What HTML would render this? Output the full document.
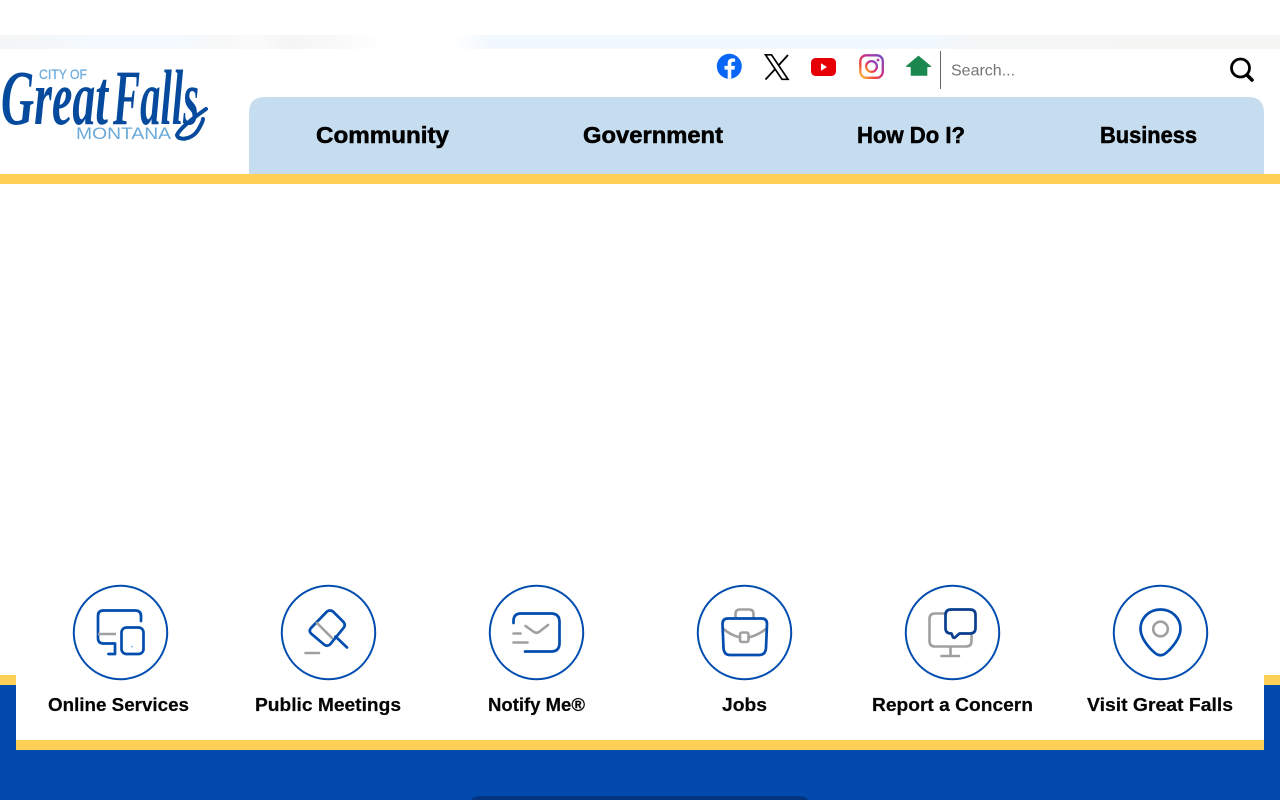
<!DOCTYPE html>
<html lang="en">
<head>
<meta charset="utf-8">
<title>City of Great Falls, Montana</title>
<style>
html,body{margin:0;padding:0;width:1280px;height:800px;overflow:hidden;background:#fff}
svg{display:block;position:absolute;left:0;top:0}
text{font-family:"Liberation Sans",sans-serif}
.nav{font-size:23px;font-weight:700;fill:#000;stroke:#000;stroke-width:.55px}
.lab{font-size:18px;font-weight:700;fill:#050505;stroke:#050505;stroke-width:.2px}
.c{fill:#fff;stroke:#024dae;stroke-width:2}
.b{fill:none;stroke:#024dae;stroke-width:2.7;stroke-linecap:round;stroke-linejoin:round}
.g{fill:none;stroke:#a0a0a0;stroke-width:2.6;stroke-linecap:round;stroke-linejoin:round}
.logo{font-family:"Liberation Serif",serif;font-size:78px;font-weight:700;font-style:italic;fill:#064a9e}
</style>
</head>
<body>
<svg width="1280" height="800" viewBox="0 0 1280 800" xmlns="http://www.w3.org/2000/svg">
<defs>
<linearGradient id="strip" x1="0" x2="1" y1="0" y2="0">
<stop offset="0" stop-color="#f3f5f6"/>
<stop offset="0.05" stop-color="#f5f8fa"/>
<stop offset="0.07" stop-color="#f4faff"/>
<stop offset="0.14" stop-color="#f4faff"/>
<stop offset="0.17" stop-color="#f6f7f7"/>
<stop offset="0.2" stop-color="#fbfbfb"/>
<stop offset="0.225" stop-color="#f5f5f5"/>
<stop offset="0.27" stop-color="#fafafa"/>
<stop offset="0.3" stop-color="#ffffff"/>
<stop offset="0.352" stop-color="#ffffff"/>
<stop offset="0.385" stop-color="#f1f8fe"/>
<stop offset="0.73" stop-color="#f1f8fe"/>
<stop offset="0.765" stop-color="#f5f6f6"/>
<stop offset="1" stop-color="#f5f5f3"/>
</linearGradient>
<linearGradient id="ig" x1="0" y1="1" x2="1" y2="0">
<stop offset="0" stop-color="#fdc83f"/>
<stop offset="0.3" stop-color="#f0463c"/>
<stop offset="0.6" stop-color="#c7318f"/>
<stop offset="1" stop-color="#6a4cc9"/>
</linearGradient>
</defs>

<!-- header strip -->
<rect x="0" y="35" width="1280" height="14" fill="url(#strip)"/>

<!-- logo -->
<text x="39" y="79" font-size="13.5" fill="#6fadde" stroke="#6fadde" stroke-width=".3" textLength="48" lengthAdjust="spacingAndGlyphs">CITY OF</text>
<text class="logo" x="1" y="124" textLength="107" lengthAdjust="spacingAndGlyphs">Great</text>
<text class="logo" x="113" y="124" textLength="86" lengthAdjust="spacingAndGlyphs">Falls</text>
<path d="M206 109 C196 116 180 128 177 135 C178 141 192 140 198 130 C201 125 203 121 203 119" fill="none" stroke="#064a9e" stroke-width="4" stroke-linecap="round"/>
<text x="76" y="139" font-size="17" fill="#6aa9d8" textLength="95" lengthAdjust="spacingAndGlyphs">MONTANA</text>

<!-- social icons -->
<circle cx="729.300" cy="66.300" r="12.500" fill="#0a66f7"/>
<path d="M731.300 78.800v-9.200h3.100l.6-3.700h-3.700v-2.200c0-1.100.5-1.900 2-1.900h1.800v-3.200c-.9-.1-1.800-.2-2.700-.2-2.900 0-4.700 1.700-4.700 4.800v2.700h-3.200v3.700h3.200v9.200z" fill="#fff"/>

<path d="M765.500 79.500 L775.500 68.700 M788 55 L778 66" fill="none" stroke="#000" stroke-width="1.800"/>
<path d="M765.500 54.800 H771.500 L788 79.300 H782 Z" fill="#fff" stroke="#000" stroke-width="1.700"/>

<rect x="811" y="58" width="25" height="18" rx="4.500" fill="#e60005"/>
<path d="M821 63.300 L827 67 L821 70.700 Z" fill="#fff"/>

<rect x="860.300" y="55.300" width="22.500" height="22.500" rx="6" fill="none" stroke="url(#ig)" stroke-width="2.300"/>
<circle cx="871.500" cy="66.500" r="5.400" fill="none" stroke="url(#ig)" stroke-width="2.200"/>
<circle cx="878" cy="60" r="1.400" fill="#a83cae"/>

<path d="M906 66.500 L918.500 56 L931 66.500 L927 67 V75.500 H911 V67 Z" fill="#1b8850" stroke="#1b8850" stroke-width=".6" stroke-linejoin="round"/>

<rect x="940" y="51" width="1" height="38" fill="#666"/>
<text x="951" y="75.500" font-size="16" fill="#757575">Search...</text>
<circle cx="1240.500" cy="68" r="9" fill="none" stroke="#000" stroke-width="2.800"/>
<path d="M1247 75 L1252 80" stroke="#000" stroke-width="3.600" stroke-linecap="round"/>

<!-- nav -->
<path d="M249 174 V113 Q249 97 265 97 H1248 Q1264 97 1264 113 V174 Z" fill="#c6ddf0"/>
<text class="nav" x="316" y="143" textLength="133" lengthAdjust="spacingAndGlyphs">Community</text>
<text class="nav" x="583" y="143" textLength="140" lengthAdjust="spacingAndGlyphs">Government</text>
<text class="nav" x="857" y="143" textLength="108" lengthAdjust="spacingAndGlyphs">How Do I?</text>
<text class="nav" x="1100" y="143" textLength="97" lengthAdjust="spacingAndGlyphs">Business</text>
<rect x="0" y="174" width="1280" height="10" fill="#ffd055"/>

<!-- footer bands -->
<rect x="0" y="675" width="1280" height="10" fill="#ffd055"/>
<rect x="0" y="685" width="1280" height="115" fill="#024aab"/>
<rect x="16" y="675" width="1248" height="65" fill="#fff"/>
<rect x="16" y="740" width="1248" height="10" fill="#ffd055"/>
<path d="M471 800 Q473 796 481 796 H798 Q806 796 808 800 Z" fill="#03347f"/>

<!-- circles -->
<circle class="c" cx="120.500" cy="632.500" r="46.700"/>
<circle class="c" cx="328.500" cy="632.500" r="46.700"/>
<circle class="c" cx="536.500" cy="632.500" r="46.700"/>
<circle class="c" cx="744.500" cy="632.500" r="46.700"/>
<circle class="c" cx="952.500" cy="632.500" r="46.700"/>
<circle class="c" cx="1160.500" cy="632.500" r="46.700"/>

<!-- icon 1 online services -->
<path class="b" d="M141 621 V616 Q141 610.500 135 610.500 H103.500 Q98 610.500 98 616 V638 Q98 643.500 103.500 643.500 H115 V654 H108.500"/>
<rect class="b" x="121.500" y="627.500" width="22" height="26.500" rx="5"/>
<path class="g" d="M98 634 H116" style="stroke-linecap:butt"/>
<circle cx="132" cy="646.700" r=".8" fill="#6f9fd8"/>

<!-- icon 2 public meetings -->
<path class="b" d="M327 611.500 Q330 609.500 333 611.500 L343.500 622 Q346 625 343.500 628 L330 644.500 Q327 647 324 644.500 L311 633.500 Q308.500 631 311 628 Z"/>
<path class="b" d="M335.500 636.500 L347 647.500"/>
<path class="g" d="M317 623 L332 638"/>
<path class="g" d="M305.500 653 H319"/>

<!-- icon 3 notify me -->
<path class="b" d="M513.500 623 V621 Q513.500 613.500 521 613.500 H551 Q559.500 613.500 559.500 622 V643 Q559.500 651.500 551 651.500 H525"/>
<path class="g" d="M525.500 626 L534 632 Q536.500 633.500 539 632 L548 625"/>
<path class="g" d="M513.500 633.500 H520.500"/>
<path class="g" d="M513.500 642.500 H527.500"/>

<!-- icon 4 jobs -->
<path class="g" d="M735.500 618 V614 Q735.500 609.500 740 609.500 H749 Q753.500 609.500 753.500 614 V618"/>
<path class="g" d="M722.500 628 Q730 635 740 637.500 M748.500 637.500 Q759 635 767 628"/>
<rect class="g" x="740" y="632.500" width="8.500" height="9.500" rx="2"/>
<path class="b" d="M728 618.500 H761.500 Q767 618.500 767 624 L766 648 Q765.500 655 759 655 H730 Q724 655 723.500 648 L722.500 624 Q722.500 618.500 728 618.500 Z"/>

<!-- icon 5 report a concern -->
<path class="g" d="M945 613.500 H935 Q929.500 613.500 929.500 619 V641 Q929.500 646.500 935 646.500 H966 Q971.500 646.500 971.500 641 V634.500"/>
<path class="g" d="M950.500 647 V656 M941.500 656 H959"/>
<path d="M951 609.500 H970 Q975.500 609.500 975.500 615 V628 Q975.500 633.500 970 633.500 H959.500 L955 637.500 Q953 638.500 952.500 636 L951.500 633.500 H951 Q945.500 633.500 945.500 628 V615 Q945.500 609.500 951 609.500 Z" fill="none" stroke="#0a3f8f" stroke-width="2.700" stroke-linejoin="round"/>

<!-- icon 6 visit great falls -->
<path class="b" d="M1160.500 609.500 C1149 609.500 1140.500 618 1140.500 629 C1140.500 638 1149 648 1155 653 Q1160.500 657.500 1166 653 C1172 648 1180.500 638 1180.500 629 C1180.500 618 1172 609.500 1160.500 609.500 Z"/>
<circle class="g" cx="1160.500" cy="629" r="7.300"/>

<!-- labels -->
<text class="lab" x="48" y="711" textLength="141" lengthAdjust="spacingAndGlyphs">Online Services</text>
<text class="lab" x="255" y="711" textLength="146" lengthAdjust="spacingAndGlyphs">Public Meetings</text>
<text class="lab" x="488" y="711" textLength="97" lengthAdjust="spacingAndGlyphs">Notify Me®</text>
<text class="lab" x="722" y="711" textLength="45" lengthAdjust="spacingAndGlyphs">Jobs</text>
<text class="lab" x="872" y="711" textLength="161" lengthAdjust="spacingAndGlyphs">Report a Concern</text>
<text class="lab" x="1087" y="711" textLength="146" lengthAdjust="spacingAndGlyphs">Visit Great Falls</text>
</svg>
</body>
</html>
